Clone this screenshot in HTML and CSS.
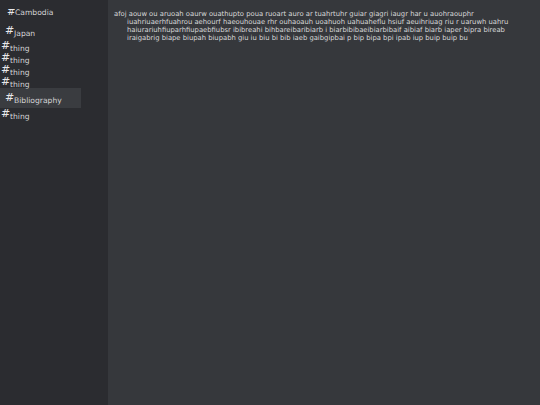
FILE: index.html
```html
<!DOCTYPE html>
<html>
<head>
<meta charset="utf-8">
<link rel="stylesheet" href="styles.css">
</head>
<body>
<div class="app">
  <nav class="sidebar">
    <div class="item item-top"><span class="hash hash-clip"><span>#</span></span><span class="label">Cambodia</span></div>
    <div class="item item-lvl1"><span class="hash">#</span><span class="label">Japan</span></div>
    <div class="item item-lvl0"><span class="hash">#</span><span class="label">thing</span></div>
    <div class="item item-lvl0"><span class="hash">#</span><span class="label">thing</span></div>
    <div class="item item-lvl0"><span class="hash">#</span><span class="label">thing</span></div>
    <div class="item item-lvl0"><span class="hash">#</span><span class="label">thing</span></div>
    <div class="item item-lvl1 item-active"><span class="hash">#</span><span class="label">Bibliography</span></div>
    <div class="item item-lvl0"><span class="hash">#</span><span class="label">thing</span></div>
  </nav>
  <main class="content">
    <p class="para">afoj aouw ou aruoah oaurw ouathupto poua ruoart auro ar tuahrtuhr guiar giagri iaugr har u auohraouphr iuahriuaerhfuahrou aehourf haeouhouae rhr ouhaoauh uoahuoh uahuaheflu hsiuf aeuihriuag riu r uaruwh uahru haiurariuhfiuparhfiupaebfiubsr ibibreahi bihbareibaribiarb i biarbibibaeibiarbibaif aibiaf biarb iaper bipra bireab iraigabrig biape biupah biupabh giu iu biu bi bib iaeb gaibgipbai p bip bipa bpi ipab iup buip buip bu</p>
  </main>
</div>
</body>
</html>
```

FILE: styles.css
```css
html, body {
  margin: 0;
  padding: 0;
  height: 100%;
}
body {
  font-family: "DejaVu Sans", sans-serif;
  background: #36383c;
  color: #d4d4d6;
}
.app {
  display: flex;
  height: 100%;
}
.sidebar {
  width: 108px;
  flex: none;
  background: #2b2c30;
  padding-top: 7px;
}
.item {
  display: flex;
  align-items: baseline;
  height: 12px;
  line-height: 12px;
}
.hash {
  font-size: 11px;
  color: #e8e8ea;
  width: 9px;
  flex: none;
}
.label {
  font-size: 7.6px;
  color: #d4d4d6;
  position: relative;
  top: 2px;
}
.item-top {
  height: 14px;
  padding-left: 7px;
}
.hash-clip {
  height: 7px;
  overflow: hidden;
  display: inline-block;
  width: 8px;
  font-size: 10px;
  line-height: 10px;
}
.hash-clip span {
  display: block;
  margin-top: -2px;
}
.item-top .label {
  top: 0;
  font-size: 7.6px;
}
.item-lvl1 {
  padding-left: 5px;
  height: 19px;
  line-height: 19px;
}
.item-lvl0 {
  padding-left: 1px;
}
.item-active {
  width: 76px;
  height: 20px;
  line-height: 20px;
  background: #3a3c40;
}
.content {
  flex: 1;
  padding: 10px 8px 0 6px;
}
.para {
  margin: 0;
  font-size: 6.8px;
  line-height: 8px;
  padding-left: 13px;
  text-indent: -13px;
  color: #d8d8da;
}
```
